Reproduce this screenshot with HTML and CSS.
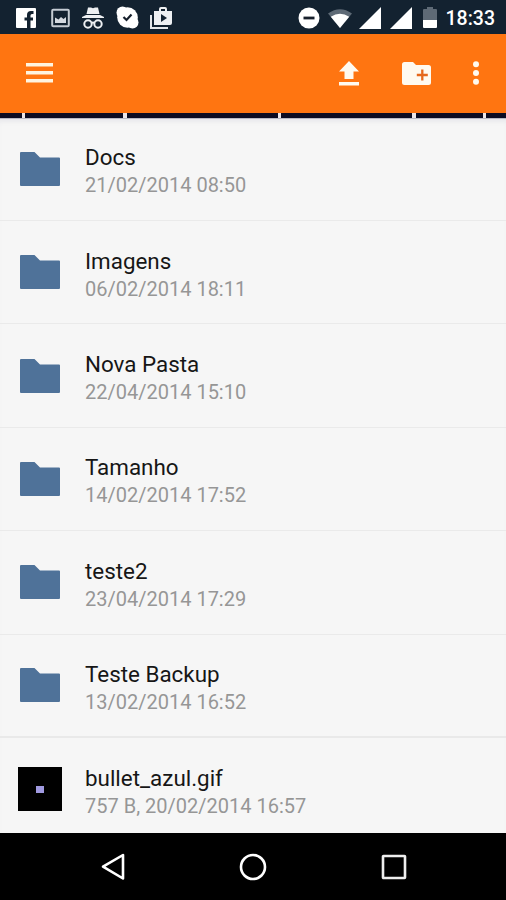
FILE: index.html
```html
<!DOCTYPE html>
<html lang="pt">
<head>
    <meta charset="UTF-8">
    <meta name="viewport" content="width=device-width, initial-scale=1.0">
    <title>Arquivos</title>
    <link rel="stylesheet" href="styles.css">
</head>
<body>
    <div class="status-bar">
        <div class="notifications">
            <svg width="20" height="20" viewBox="0 0 20 20">
                <path fill="#fff" fill-rule="evenodd" d="M1 0h18a1 1 0 0 1 1 1v18a1 1 0 0 1-1 1h-4.500v-7.500h2.500V9.500h-2.500V7.500q0-1.500 1.500-1.500h1.500V3h-2.500Q11 3 11 7v2.500H8.500v3H11V20H1a1 1 0 0 1-1-1V1a1 1 0 0 1 1-1z"/>
            </svg>
            <svg width="19" height="20" viewBox="0 0 19 20">
                <rect x="1.200" y="1.700" width="16.600" height="16.600" rx="1" fill="none" stroke="#c5ccd3" stroke-width="2"/>
                <path fill="#d5dae0" d="M4 15V9.500l3.500 2L10 9l2.500 2L15 9v6z"/>
            </svg>
            <svg width="22" height="22" viewBox="0 0 22 22">
                <path fill="#eef0f2" d="M6 0.500h3l2 .7 2-.7h3L17.500 7h-13zM0 10l4-2h14l4 2v1H0z"/>
                <g fill="none" stroke="#eef0f2" stroke-width="2">
                    <circle cx="6" cy="17" r="3.700"/>
                    <circle cx="16" cy="17" r="3.700"/>
                    <path d="M9.500 16q1.500-1 3 0"/>
                </g>
            </svg>
            <svg width="23" height="23" viewBox="0 0 23 23">
                <circle cx="11.500" cy="11.500" r="10.300" fill="#fff"/>
                <circle cx="6.500" cy="6.500" r="6" fill="#fff"/>
                <circle cx="16.500" cy="16.500" r="6" fill="#fff"/>
                <path d="M7.500 11l3 3L15.500 8.500" fill="none" stroke="#17202c" stroke-width="2.200"/>
            </svg>
            <svg width="22" height="22" viewBox="0 0 22 22">
                <path d="M1 8v13h17" fill="none" stroke="#e4e7ea" stroke-width="2"/>
                <path fill="#eef0f2" fill-rule="evenodd" d="M4 4h5V2q0-2 2-2h4q2 0 2 2v2h5v12q0 2-2 2H4zM11 4h4V2h-4zM11 7v8l6-4z"/>
            </svg>
        </div>
        <div class="system">
            <svg width="22" height="22" viewBox="0 0 22 22">
                <circle cx="11" cy="11" r="10.500" fill="#fff"/>
                <rect x="5.500" y="9.600" width="11" height="2.800" fill="#17202c"/>
            </svg>
            <svg class="wifi" width="24" height="19" viewBox="0 0 24 19">
                <path fill="#5e6a76" d="M0 4.500Q12-4 24 4.500L12 19z"/>
                <path fill="#fff" d="M2.800 7.800Q12 1.600 21.200 7.800L12 19z"/>
            </svg>
            <svg class="signal" width="22" height="22" viewBox="0 0 22 22">
                <path fill="#fff" d="M22 0v22H0z"/>
            </svg>
            <svg class="signal" width="22" height="22" viewBox="0 0 22 22">
                <path fill="#fff" d="M22 0v22H0z"/>
            </svg>
            <svg class="battery" width="14" height="21" viewBox="0 0 14 21">
                <path fill="#5e6a76" d="M4 0h6v2h3q1 0 1 1v10H0V3q0-1 1-1h3z"/>
                <path fill="#fff" d="M0 13h14v7q0 1-1 1H1q-1 0-1-1z"/>
            </svg>
            <span class="clock">18:33</span>
        </div>
    </div>

    <div class="toolbar">
        <svg width="27" height="20" viewBox="0 0 27 20">
            <path fill="#fff4e0" d="M0 0h27v3.600H0zM0 8h27v3.600H0zM0 16h27v3.600H0z"/>
        </svg>
        <div class="actions">
            <svg width="20" height="25" viewBox="0 0 20 25">
                <path fill="#fffaf0" d="M10 0l10 10.500h-5.500V18h-9v-7.500H0zM0 21h20v3.500H0z"/>
            </svg>
            <svg width="29" height="23" viewBox="0 0 29 23">
                <path fill="#fffaf0" d="M2.500 0H11l3 3h12.500Q29 3 29 5.500v15q0 2.500-2.500 2.500h-24Q0 23 0 20.500v-18Q0 0 2.500 0z"/>
                <path d="M20.300 7.500v11M14.800 13h11" stroke="#e5681c" stroke-width="2.300"/>
            </svg>
            <svg width="6" height="24" viewBox="0 0 6 24">
                <g fill="#fffaf0">
                    <circle cx="3" cy="3.200" r="3"/>
                    <circle cx="3" cy="12" r="3"/>
                    <circle cx="3" cy="20.800" r="3"/>
                </g>
            </svg>
        </div>
    </div>

    <div class="tabs">
        <span></span><span></span><span></span><span></span><span></span><span></span>
    </div>

    <div class="files" id="files"></div>

    <div class="nav-bar">
        <svg width="24" height="28" viewBox="0 0 24 28">
            <path d="M22 2v23.500L2 13.700z" fill="none" stroke="#fff" stroke-width="2.600" stroke-linejoin="round"/>
        </svg>
        <svg width="28" height="28" viewBox="0 0 28 28">
            <circle cx="14" cy="14" r="12" fill="none" stroke="#fff" stroke-width="2.600"/>
        </svg>
        <svg width="26" height="26" viewBox="0 0 26 26">
            <rect x="2" y="2" width="22" height="22" rx=".5" fill="none" stroke="#eee" stroke-width="2.600"/>
        </svg>
    </div>

    <script>
        const files = [
            { name: "Docs", info: "21/02/2014 08:50" },
            { name: "Imagens", info: "06/02/2014 18:11" },
            { name: "Nova Pasta", info: "22/04/2014 15:10" },
            { name: "Tamanho", info: "14/02/2014 17:52" },
            { name: "teste2", info: "23/04/2014 17:29" },
            { name: "Teste Backup", info: "13/02/2014 16:52" },
            { name: "bullet_azul.gif", info: "757 B, 20/02/2014 16:57", image: true }
        ];

        const folderIcon = `<svg width="40" height="34" viewBox="0 0 40 34">
            <path fill="#4f7299" d="M1 0h13.500l5.500 5.500h19q1 0 1 1V33q0 1-1 1H1q-1 0-1-1V1q0-1 1-1z"/>
        </svg>`;
        const thumb = `<div class="thumb"><span class="bullet"></span></div>`;

        const list = document.getElementById("files");
        for (const file of files) {
            list.innerHTML += `<div class="file">
                <div class="icon">${file.image ? thumb : folderIcon}</div>
                <div class="details">
                    <div class="name">${file.name}</div>
                    <div class="info">${file.info}</div>
                </div>
            </div>`;
        }
    </script>
</body>
</html>
```
FILE: styles.css
```css
body {
    margin: 0;
    width: 506px;
    height: 900px;
    display: flex;
    flex-direction: column;
    overflow: hidden;
    font-family: Roboto, sans-serif;
    background-color: #f6f6f6;
}
svg {
    display: block;
    flex-shrink: 0;
}
.status-bar {
    box-sizing: border-box;
    height: 34px;
    flex-shrink: 0;
    padding: 1px 11px 0 16px;
    display: flex;
    align-items: center;
    justify-content: space-between;
    background-color: #132230;
}
.notifications {
    display: flex;
    align-items: center;
    gap: 12px;
}
.notifications svg:first-child {
    margin-right: 3px;
}
.notifications svg:last-child {
    margin-left: -1px;
}
.system {
    display: flex;
    align-items: center;
}
.wifi {
    margin: 2px 0 0 8px;
}
.signal {
    margin-left: 7px;
}
.signal + .signal {
    margin-left: 9px;
}
.battery {
    margin: 0 9px 0 11px;
}
.clock {
    color: #fff;
    font-size: 19.500px;
    font-weight: 500;
    line-height: 22px;
    margin-top: 2px;
}
.toolbar {
    box-sizing: border-box;
    height: 79px;
    flex-shrink: 0;
    padding: 0 27px 1px 26px;
    display: flex;
    align-items: center;
    justify-content: space-between;
    background-color: #ff7511;
}
.actions {
    display: flex;
    align-items: center;
    gap: 42px;
}
.actions svg:first-child {
    margin-right: 1px;
}
/* strip of tabs, only the bottom edge shows under the toolbar */
.tabs {
    height: 5px;
    flex-shrink: 0;
    display: grid;
    grid-template-columns: 21.500px 98.500px 151.500px 131px 67px 20px;
    column-gap: 3.300px;
    background-color: #ece6e8;
    border-bottom: 1px solid #b9b9c2;
}
.tabs span {
    background-color: #0c0c22;
}
.files {
    height: 714px;
    flex-shrink: 0;
    overflow: hidden;
    box-shadow: inset 0 5px 4px -2px #e9e9ec;
}
.file {
    box-sizing: border-box;
    height: 103.400px;
    padding-left: 18px;
    display: flex;
    align-items: center;
    border-bottom: 1px solid #eaeaea;
}
.file:first-child {
    height: 102px;
}
.file:first-child .icon {
    margin-bottom: 2px;
}
.file:nth-child(6) {
    border-bottom: 2px solid #e9e9e9;
}
.icon {
    width: 44px;
    margin-right: 23px;
    display: flex;
    justify-content: center;
}
.details {
    padding-top: 5px;
}
.file:first-child .details {
    padding-top: 3px;
}
.name {
    color: #161616;
    font-size: 22.400px;
    line-height: 28px;
}
.info {
    color: #969696;
    font-size: 20px;
    line-height: 28px;
}
.thumb {
    width: 44px;
    height: 44px;
    display: flex;
    align-items: center;
    justify-content: center;
    background-color: #000;
}
.bullet {
    width: 8px;
    height: 7px;
    background-color: #a09ae0;
}
.nav-bar {
    box-sizing: border-box;
    flex: 1;
    padding: 0 99px 0 101px;
    display: flex;
    align-items: center;
    justify-content: space-between;
    background-color: #000;
}
```
